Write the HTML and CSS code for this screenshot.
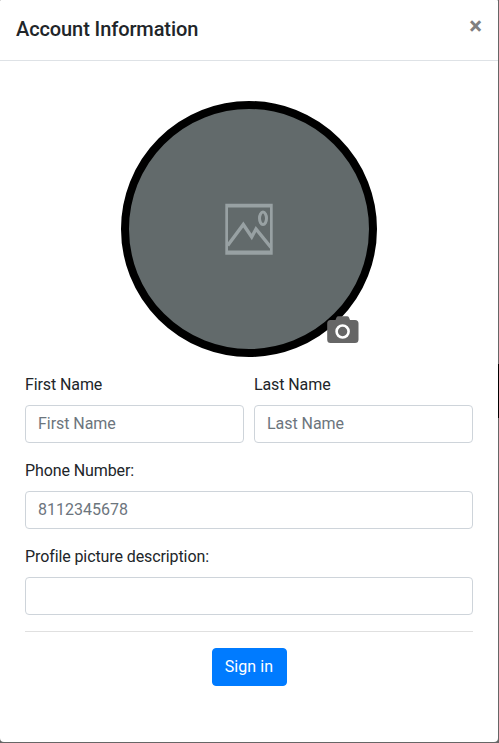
FILE: index.html
```html
<!DOCTYPE html>
<html lang="en">
<head>
<meta charset="utf-8">
<title>Account Information</title>
<link rel="stylesheet" href="styles.css">
</head>
<body>
<div class="modal">
  <header class="modal-header">
    <h5 class="title">Account Information</h5>
    <button class="close" type="button" aria-label="Close">×</button>
  </header>
  <form class="modal-body">
    <div class="avatar">
      <svg class="placeholder" viewBox="0 0 48 52" width="48" height="52" fill="none" stroke="#98a1a3" stroke-width="3.4">
        <path d="M.3 .8H47.700V51.700H.3ZM3 4.500V47.500H45V4.500Z" fill="#98a1a3" fill-rule="evenodd" stroke="none"/>
        <path d="M2.700 42.500 18.300 21.500 26.700 34 31 26 46 44.500"/>
        <ellipse cx="38" cy="15.300" rx="3.500" ry="6.200" stroke-width="3"/>
      </svg>
      <svg class="camera" viewBox="0 0 32 28" width="32" height="28">
        <path fill="#666" d="M3.500 4H8.500L9.500 1.500Q10 .2 11.500 .2H20Q21.500 .2 22 1.500L23 4H28Q31.500 4 31.500 7.500V23.500Q31.500 27 28 27H3.500Q.2 27 .2 23.500V7.500Q.2 4 3.500 4Z"/>
        <circle cx="15.600" cy="15.500" r="6" fill="none" stroke="#fff" stroke-width="2.600"/>
      </svg>
    </div>
    <div class="row">
      <div class="field"><label for="first">First Name</label><input id="first" placeholder="First Name"></div>
      <div class="field"><label for="last">Last Name</label><input id="last" placeholder="Last Name"></div>
    </div>
    <div class="field"><label for="phone">Phone Number:</label><input id="phone" class="number" placeholder="8112345678"></div>
    <div class="field"><label for="desc">Profile picture description:</label><input id="desc"></div>
    <hr>
    <button class="submit" type="button">Sign in</button>
  </form>
</div>
</body>
</html>
```
FILE: styles.css
```css
* { box-sizing: border-box; }
body { margin: 0; height: 743px; background: linear-gradient(#666 364px, #000 364px, #000 418px, #666 418px); font: 16px/24px Roboto, sans-serif; color: #212529; overflow: hidden; }
.modal { width: 498px; height: 742px; background: #fff; border-radius: 1px 1px 4px 4px; }
.modal-header { display: flex; justify-content: space-between; align-items: flex-start; height: 61px; padding: 14px 16px; border-bottom: 1px solid #dee2e6; }
.title { margin: 0; font-size: 20px; line-height: 30px; font-weight: 500; letter-spacing: -.1px; }
.close { border: 0; background: none; padding: 0; font: 700 24px/24px Roboto, sans-serif; color: #7f7f7f; }
.modal-body { padding: 40px 25px 0; }
.avatar { position: relative; display: flex; align-items: center; justify-content: center; width: 256px; height: 256px; margin: 0 auto 16px; border: 8px solid #000; border-radius: 50%; background: #626a6b; }
.camera { position: absolute; left: 198px; top: 207px; }
.row { display: grid; grid-template-columns: 1fr 1fr; gap: 10px; }
.field { margin-bottom: 16px; }
label { display: block; margin-bottom: 8px; letter-spacing: -.1px; }
input { display: block; width: 100%; height: 38px; padding: 5px 12px 7px; border: 1px solid #ced4da; border-radius: 4px; font: inherit; letter-spacing: -.05px; color: #495057; }
.number { letter-spacing: 0; }
input::placeholder { color: #6c757d; opacity: 1; }
hr { height: 1px; margin: 16px 0; border: 0; background: #e0e0e0; }
.submit { display: block; width: 75px; height: 38px; margin: 0 auto; padding: 6px 0; border: 1px solid #007bff; border-radius: 4px; background: #007bff; color: #fff; font: inherit; letter-spacing: .1px; }
```
